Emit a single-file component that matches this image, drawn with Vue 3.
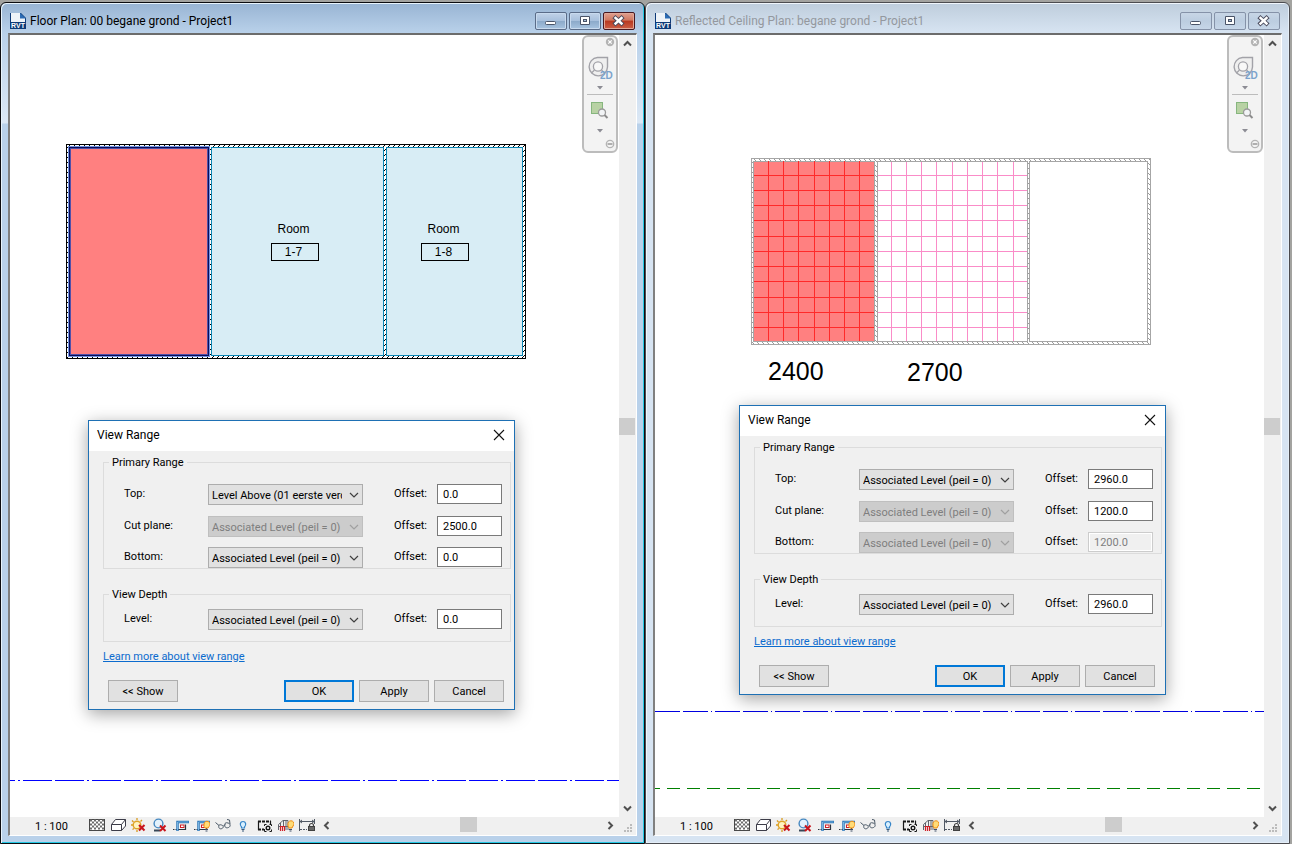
<script setup>
import { reactive } from 'vue'

const ASSOCIATED = 'Associated Level (peil = 0)'
const ABOVE = 'Level Above (01 eerste verdieping)'

const windows = reactive([
  {
    id: 'floor',
    title: 'Floor Plan: 00 begane grond - Project1',
    active: true,
    primary: [
      { name: 'Top:', level: ABOVE, offset: '0.0' },
      { name: 'Cut plane:', level: ASSOCIATED, offset: '2500.0', levelOff: true },
      { name: 'Bottom:', level: ASSOCIATED, offset: '0.0' },
    ],
    depth: [{ name: 'Level:', level: ASSOCIATED, offset: '0.0' }],
  },
  {
    id: 'ceiling',
    title: 'Reflected Ceiling Plan: begane grond - Project1',
    active: false,
    primary: [
      { name: 'Top:', level: ASSOCIATED, offset: '2960.0' },
      { name: 'Cut plane:', level: ASSOCIATED, offset: '1200.0', levelOff: true },
      { name: 'Bottom:', level: ASSOCIATED, offset: '1200.0', levelOff: true, offsetOff: true },
    ],
    depth: [{ name: 'Level:', level: ASSOCIATED, offset: '2960.0' }],
  },
])

const groups = (w) => [
  { key: 'primary', legend: 'Primary Range', rows: w.primary },
  { key: 'depth', legend: 'View Depth', rows: w.depth },
]

const rooms = [
  { x: 283.5, tag: '1-7' },
  { x: 433.5, tag: '1-8' },
]
const gridRows = [140, 155, 170, 185, 201, 216, 231, 246, 262, 277, 292]
const gridRed = [113, 128, 143, 159, 174, 189, 204]
const gridPink = [236, 251, 266, 281, 297, 312, 327, 342, 358]
const tools = [
  'Detail Level', 'Visual Style', 'Sun Path', 'Shadows', 'Crop View', 'Show Crop Region',
  'Temporary Hide/Isolate', 'Reveal Hidden Elements', 'Temporary View Properties',
  'Analytical Model', 'Reveal Constraints',
]
</script>

<template>
  <main class="desktop">
    <section v-for="w in windows" :key="w.id" class="window" :class="{ active: w.active }">
      <header class="titlebar">
        <svg class="app-icon" width="16" height="16" viewBox="0 0 16 16">
          <path d="M0 0H11L16 5V16H0Z" fill="#0d3a78" />
          <path d="M1 0H10V5H15V9H1Z" fill="#eef3f8" />
          <path d="M10 0L16 5.500H10Z" fill="#2c6cb4" />
          <text x="8" y="15" text-anchor="middle" class="rvt">RVT</text>
        </svg>
        <h1>{{ w.title }}</h1>
        <div class="caption">
          <button type="button" aria-label="Minimize">
            <svg width="30" height="16" viewBox="0 0 30 16"><rect x="9.500" y="8.500" width="10" height="3" rx="1" fill="#fff" stroke="#4a5468" /></svg>
          </button>
          <button type="button" aria-label="Maximize">
            <svg width="30" height="16" viewBox="0 0 30 16"><path d="M10.500 3.500h9v8h-9z" fill="#fff" stroke="#4a5468" /><rect x="13.500" y="6.500" width="3" height="2" fill="#a9bfd8" stroke="#4a5468" /></svg>
          </button>
          <button type="button" aria-label="Close" class="close">
            <svg width="30" height="16" viewBox="0 0 30 16"><path d="M11.500 5l6 5.500M17.500 5l-6 5.500" stroke="#4a4a5c" stroke-width="4.400" stroke-linecap="square" /><path d="M11.500 5l6 5.500M17.500 5l-6 5.500" stroke="#fff" stroke-width="2.400" stroke-linecap="square" /></svg>
          </button>
        </div>
      </header>

      <div class="client">
        <div class="view">
          <div class="canvas">
            <svg v-if="w.id === 'floor'" class="drawing" width="100%" height="100%">
              <defs>
                <pattern id="hatch-black" width="5" height="5" patternUnits="userSpaceOnUse">
                  <path d="M0 4h1v1h-1zM1 3h1v1h-1zM2 2h1v1h-1zM3 1h1v1h-1zM4 0h1v1h-1z" fill="#000" />
                </pattern>
              </defs>
              <g shape-rendering="crispEdges">
                <rect x="56.500" y="109.500" width="459" height="214" fill="#fff" />
                <rect x="56.500" y="109.500" width="459" height="214" fill="url(#hatch-black)" stroke="#000" />
                <rect x="201.500" y="112.500" width="172" height="208" fill="#d8edf5" stroke="#0a86b4" />
                <rect x="376.500" y="112.500" width="136" height="208" fill="#d8edf5" stroke="#0a86b4" />
                <rect x="58.500" y="111.500" width="141" height="210" fill="#ff8080" stroke="#6f90e0" />
                <rect x="59.500" y="112.500" width="139" height="208" fill="none" stroke="#080c58" />
                <rect x="60.500" y="113.500" width="137" height="206" fill="none" stroke="#5050a8" />
                <rect v-for="r in rooms" :key="r.tag" :x="r.x - 22" y="208.500" width="47" height="17" fill="none" stroke="#000" />
                <line x1="0" y1="745.500" x2="100%" y2="745.500" stroke="#0000ff" stroke-dasharray="29 3 2 3 29 3" stroke-dashoffset="24" />
              </g>
              <template v-for="r in rooms" :key="r.tag">
                <text :x="r.x" y="198" class="room">Room</text>
                <text :x="r.x" y="221" class="room">{{ r.tag }}</text>
              </template>
            </svg>
            <svg v-else class="drawing" width="100%" height="100%">
              <defs>
                <pattern id="hatch-gray" width="5" height="5" patternUnits="userSpaceOnUse">
                  <path d="M0 0h1v1h-1zM1 1h1v1h-1zM2 2h1v1h-1zM3 3h1v1h-1zM4 4h1v1h-1z" fill="#9a9a9a" />
                </pattern>
              </defs>
              <g shape-rendering="crispEdges" stroke="#a6a6a6">
                <rect x="96.500" y="123.500" width="399" height="186" fill="url(#hatch-gray)" />
                <rect x="98.500" y="126.500" width="121" height="180" fill="#ff8080" />
                <rect x="222.500" y="126.500" width="150" height="180" fill="#fff" />
                <rect x="374.500" y="126.500" width="118" height="180" fill="#fff" />
                <g stroke="#ff2a2a">
                  <path v-for="x in gridRed" :key="x" :d="`M${x + 0.5} 126V306`" />
                  <path v-for="y in gridRows" :key="y" :d="`M99 ${y + 0.5}H219`" />
                </g>
                <g stroke="#fa8cc8">
                  <path v-for="x in gridPink" :key="x" :d="`M${x + 0.5} 127V306`" />
                  <path v-for="y in gridRows" :key="y" :d="`M223 ${y + 0.5}H372`" />
                </g>
                <line x1="0" y1="676.500" x2="100%" y2="676.500" stroke="#0000e0" stroke-dasharray="25 3 1 3 25 3" stroke-dashoffset="32" />
                <line x1="0" y1="753.500" x2="100%" y2="753.500" stroke="#008000" stroke-dasharray="13 7" stroke-dashoffset="8" />
              </g>
              <text x="113" y="345" class="height-note">2400</text>
              <text x="252" y="346" class="height-note">2700</text>
            </svg>

            <nav class="navbar" aria-label="Navigation">
              <button type="button" class="end" aria-label="Close navigation bar">
                <svg width="10" height="10" viewBox="0 0 10 10"><circle cx="5" cy="5" r="4.200" fill="#b4b4b4" /><path d="M3.300 3.300l3.400 3.400M6.700 3.300l-3.400 3.400" stroke="#fff" stroke-width="1.200" /></svg>
              </button>
              <button type="button" class="wheel" aria-label="Steering wheel 2D">
                <svg width="30" height="35" viewBox="0 0 30 35">
                  <path d="M12.500 10.500H22.500V20A9.200 9.200 0 1 1 12.500 10.500Z" fill="#efefef" stroke="#a2a2a8" stroke-width="1.400" />
                  <circle cx="13" cy="19.500" r="4.600" fill="#f8f8f8" stroke="#a2a2a8" stroke-width="1.300" />
                  <path d="M9.500 23L6.500 26M16.500 23l2.500 2.500" stroke="#a2a2a8" stroke-width="1.200" />
                  <text x="15" y="32" class="two-d">2D</text>
                </svg>
              </button>
              <button type="button" class="drop" aria-label="Wheel options"><svg width="6" height="4" viewBox="0 0 6 4"><path d="M0 0H6L3 3.500Z" fill="#8c8c94" /></svg></button>
              <hr />
              <button type="button" class="region" aria-label="Zoom region">
                <svg width="20" height="20" viewBox="0 0 20 20">
                  <rect x="1.500" y="2.500" width="11" height="11" fill="#b8d2a4" stroke="#86b67e" />
                  <circle cx="12" cy="12.500" r="3.500" fill="#f2f4f6" stroke="#9a9a9a" stroke-width="1.300" />
                  <path d="M14.500 15l3 3" stroke="#8c8c8c" stroke-width="2" />
                </svg>
              </button>
              <button type="button" class="drop" aria-label="Zoom options"><svg width="6" height="4" viewBox="0 0 6 4"><path d="M0 0H6L3 3.500Z" fill="#8c8c94" /></svg></button>
              <button type="button" class="end last" aria-label="Navigation bar menu">
                <svg width="10" height="10" viewBox="0 0 10 10"><circle cx="5" cy="5" r="3.700" fill="#f4f4f4" stroke="#b4b4b4" stroke-width="1.300" /><path d="M2.500 5h5" stroke="#a8a8a8" stroke-width="1.800" /></svg>
              </button>
            </nav>

            <form class="dialog" :class="w.id" @submit.prevent>
              <div class="dialog-title">
                <h2>View Range</h2>
                <button type="button" aria-label="Close dialog">
                  <svg width="12" height="12" viewBox="0 0 12 12"><path d="M1 1l10 10M11 1L1 11" stroke="#111" stroke-width="1.100" /></svg>
                </button>
              </div>
              <div class="dialog-body">
                <fieldset v-for="g in groups(w)" :key="g.key" :class="g.key">
                  <legend>{{ g.legend }}</legend>
                  <div class="rows">
                    <template v-for="(r, i) in g.rows" :key="r.name">
                      <label :for="`${w.id}-${g.key}-level-${i}`">{{ r.name }}</label>
                      <span class="combo" :class="{ off: r.levelOff }">
                        <select :id="`${w.id}-${g.key}-level-${i}`" v-model="r.level" :disabled="r.levelOff">
                          <option>{{ ASSOCIATED }}</option>
                          <option>{{ ABOVE }}</option>
                        </select>
                        <svg width="10" height="6" viewBox="0 0 10 6"><path d="M1 1l4 4 4-4" fill="none" stroke="currentColor" stroke-width="1.200" /></svg>
                      </span>
                      <label class="offset" :for="`${w.id}-${g.key}-offset-${i}`">Offset:</label>
                      <input :id="`${w.id}-${g.key}-offset-${i}`" v-model="r.offset" type="text" :disabled="r.offsetOff" />
                    </template>
                  </div>
                </fieldset>
                <a href="#">Learn more about view range</a>
                <div class="actions">
                  <button type="button" class="show">&lt;&lt; Show</button>
                  <button type="submit" class="default">OK</button>
                  <button type="button">Apply</button>
                  <button type="button">Cancel</button>
                </div>
              </div>
            </form>
          </div>

          <div class="scroll vertical">
            <button type="button" aria-label="Scroll up"><svg width="9" height="7" viewBox="0 0 9 7"><path d="M1 5.500L4.500 2 8 5.500" fill="none" stroke="#505050" stroke-width="2" /></svg></button>
            <div class="track"><div class="thumb"></div></div>
            <button type="button" aria-label="Scroll down"><svg width="9" height="7" viewBox="0 0 9 7"><path d="M1 1.500L4.500 5 8 1.500" fill="none" stroke="#505050" stroke-width="2" /></svg></button>
          </div>
        </div>

        <footer class="status">
          <button type="button" class="scale">1 : 100</button>
          <div class="tools">
            <button v-for="(t, i) in tools" :key="t" type="button" :aria-label="t">
              <svg width="16" height="16" viewBox="0 0 16 16" fill="none">
                <template v-if="i === 0">
                  <rect x="0.500" y="1.500" width="15" height="11" fill="#fff" stroke="#484848" />
                  <path v-for="n in 5" :key="n" :d="`M${n % 2 ? 1 : 3} ${n * 2 + 0.5}H15`" stroke="#6c6c6c" stroke-width="2" stroke-dasharray="2 2" />
                </template>
                <template v-else-if="i === 1">
                  <path d="M1.500 6.500L5.500 1.500H15.500V8L11.500 12.500H1.500Z" fill="#fff" stroke="#3c3c48" />
                  <path d="M1.500 6.500H11.500V12.500M11.500 6.500L15.500 1.500" stroke="#3c3c48" />
                </template>
                <template v-else-if="i === 2">
                  <path d="M6 0V2M1 2.500L2.500 4M0 7H2M1.500 11.500L3 10.500M11 2L9.500 3.500M6 12V14" stroke="#d89a20" stroke-width="1.300" />
                  <circle cx="6" cy="7" r="3.800" fill="#fff4c0" stroke="#e0a428" stroke-width="1.400" />
                  <path d="M8 7l5.500 5.500M13.500 7l-5.500 5.500" stroke="#c8141c" stroke-width="2" />
                </template>
                <template v-else-if="i === 3">
                  <path d="M2 12.500H8" stroke="#384858" stroke-width="2" />
                  <circle cx="6.500" cy="5.500" r="4.400" fill="#e4f2fc" stroke="#4688c0" stroke-width="1.400" />
                  <path d="M8 7.500l5.500 5.500M13.500 7.500l-5.500 5.500" stroke="#c8141c" stroke-width="2" />
                </template>
                <template v-else-if="i === 4 || i === 5">
                  <path d="M0 11.500H1.500M2.500 11.500H12.500V6.500" stroke="#2c3440" stroke-width="1.200" />
                  <path d="M4.500 13V4H16" stroke="#2470b4" stroke-width="2.400" />
                  <path d="M4.500 12.500V4H15.500" stroke="#8cc4ec" stroke-width="0.800" />
                  <rect x="7.500" y="7" width="3.500" height="2.500" fill="#fff" stroke="#d02028" />
                  <g v-if="i === 5"><path d="M10 6a3 3 0 1 1 5 2.500L14 10H11L10 8.500Z" fill="#ffdc78" stroke="#f08c10" /><path d="M11 11.500H14M11.500 13H13.500" stroke="#405068" /></g>
                </template>
                <template v-else-if="i === 6">
                  <path d="M0.500 4.500L4 7.500M4 7.500C3 10 5 11.500 7 10.500S8.500 7.500 6.500 7 4.500 6.500 4 7.500ZM8.500 8L10 6.500M10 6C9 9 11 10.500 13.500 9.500S15.500 5.500 13 5 10.500 4.500 10 6ZM12 1.500L14.500 2 15 6" stroke="#4a5866" />
                </template>
                <template v-else-if="i === 7">
                  <path d="M5.500 9C3.500 7 4 3.500 7 3.500S10.500 7 8.500 9V10H5.500Z" fill="#d8f0ff" stroke="#3484c8" stroke-width="1.200" />
                  <path d="M5.500 11.500H8.500M6 13H8" stroke="#385878" />
                </template>
                <template v-else-if="i === 8">
                  <path d="M1 3.500H14M1 11.500H7" stroke="#181818" stroke-width="1.800" stroke-dasharray="3 1" />
                  <path d="M1.500 3V12M13.500 3V6" stroke="#181818" stroke-width="1.200" />
                  <path d="M7.500 8V6.500H9.500M12.500 6.500H14.500V8M7.500 11V13.500H9.500M12.500 13.500H14.500V11.500" stroke="#181818" />
                  <circle cx="11" cy="10" r="1.800" fill="#fff" stroke="#181818" stroke-width="1.400" />
                </template>
                <template v-else-if="i === 9">
                  <path d="M0.500 12V6.500L5 2.500H10V12M0 8.500H10M2.500 5V8M5.500 2.500V8M8 3V12" stroke="#60646c" />
                  <path d="M2.500 13V8.500H6.500V13M4.500 8.500V13" stroke="#d02028" stroke-width="1.200" />
                  <path d="M10 5.500a3 3 0 1 1 5 2.500L14 10H11L10 8Z" fill="#ffdc78" stroke="#f08c10" />
                  <path d="M11 11.500H14M11.500 13H13.500" stroke="#405068" />
                </template>
                <template v-else>
                  <path d="M0.500 1V13M15.500 1V6M1 3.500H15M3 2L1 3.500 3 5M13 2L15 3.500 13 5" stroke="#505864" />
                  <path d="M1 11.500H8" stroke="#505864" stroke-dasharray="2 1" />
                  <path d="M10.500 9V7.500a2 2 0 0 1 4 0V9" stroke="#404040" stroke-width="1.200" />
                  <rect x="9.500" y="8.500" width="6" height="4" fill="#686868" stroke="#404040" />
                </template>
              </svg>
            </button>
          </div>
          <div class="scroll horizontal">
            <button type="button" aria-label="Scroll left"><svg width="7" height="9" viewBox="0 0 7 9"><path d="M5.500 1L2 4.500 5.500 8" fill="none" stroke="#505050" stroke-width="2" /></svg></button>
            <div class="track"><div class="thumb"></div></div>
            <button type="button" aria-label="Scroll right"><svg width="7" height="9" viewBox="0 0 7 9"><path d="M1.500 1L5 4.500 1.500 8" fill="none" stroke="#505050" stroke-width="2" /></svg></button>
          </div>
          <svg class="grip" width="17" height="18" viewBox="0 0 17 18"><path d="M11 7h2v2h-2zM11 10h2v2h-2zM8 10h2v2h-2zM11 13h2v2h-2zM8 13h2v2h-2zM5 13h2v2h-2z" fill="#bcbcbc" /></svg>
        </footer>
      </div>
    </section>
  </main>
</template>

<style>
html,
body {
  margin: 0;
  background: #a3a3a0;
}
</style>

<style scoped>
* {
  box-sizing: border-box;
}
button,
input,
select {
  font: inherit;
  color: inherit;
  margin: 0;
}
button {
  padding: 0;
  border: 0;
  background: none;
}
svg {
  display: block;
}
.desktop {
  display: flex;
  min-height: 100vh;
  padding: 2px 2px 0 0;
  font: 11px/15px Roboto, 'Noto Sans', sans-serif;
  color: #000;
}
.window {
  flex: 1;
  min-width: 0;
  display: flex;
  flex-direction: column;
  padding: 0 7px 7px;
  border: 1px solid #4c4c50;
  border-radius: 6px 6px 0 0;
  background: linear-gradient(#becddc, #d7e4f2 30px);
  box-shadow: inset 1px 1px 0 #f0f6fc, inset -1px -1px 0 #e4eef8;
}
.window.active {
  border-color: #0c0c10;
  background: linear-gradient(#98b4d3, #b9d1ea 30px, #dce8f5 120px, #b9d1ea 121px);
  box-shadow: inset 1px 1px 0 #e8f4fc, inset -1px -1px 0 #24c8e4;
}
.titlebar {
  display: flex;
  align-items: center;
  height: 30px;
  padding: 6px 2px 0;
}
.rvt {
  font: bold 7px 'Liberation Sans', sans-serif;
  fill: #fff;
}
.titlebar h1 {
  flex: 1;
  margin: 0 0 0 4px;
  font-size: 12px;
  font-weight: 400;
  line-height: 18px;
  white-space: nowrap;
  color: #94989e;
}
.active .titlebar h1 {
  color: #000;
}
.caption {
  display: flex;
  gap: 2px;
}
.caption button {
  width: 32px;
  height: 18px;
  border: 1px solid #8592a8;
  border-radius: 2px;
  background: linear-gradient(#c8d6e6, #bccde0 50%, #c6d6e8);
}
.active .caption button {
  border-color: #5a6c88;
  background: linear-gradient(#c0d2e8, #a8c0dc 48%, #8caaca 52%, #a8c4e0);
  box-shadow: inset 0 0 0 1px #c8daee;
}
.active .caption .close {
  border-color: #481820;
  background: linear-gradient(#e0a090, #d07860 45%, #b83820 50%, #cc6048);
  box-shadow: inset 0 0 0 1px #e0a898;
}
.client {
  flex: 1;
  display: flex;
  flex-direction: column;
  border: solid #fff;
  border-width: 2px 1px 1px 2px;
  border-top-color: #6c6c6c;
  border-left-color: #808080;
}
.view {
  flex: 1;
  display: flex;
}
.canvas {
  flex: 1;
  position: relative;
  overflow: hidden;
  background: #fff;
}
.drawing {
  position: absolute;
  inset: 0;
}
.room {
  font: 12px 'Liberation Sans', sans-serif;
  text-anchor: middle;
}
.height-note {
  font: 25px 'Liberation Sans', sans-serif;
}

.navbar {
  position: absolute;
  top: 0;
  right: 1px;
  width: 36px;
  border: 2px solid #bcbcbc;
  border-radius: 6px;
  background: #f3f3f3;
  display: flex;
  flex-direction: column;
}
.navbar button {
  display: flex;
  justify-content: center;
  align-items: center;
}
.navbar .end {
  justify-content: flex-end;
  padding-right: 1px;
}
.navbar .end.last {
  height: 14px;
}
.navbar .drop {
  height: 12px;
}
.navbar .region {
  height: 30px;
}
.navbar hr {
  width: 26px;
  margin: 0 auto;
  border: 0;
  border-top: 1px solid #bcbcbc;
}
.two-d {
  font: bold 10px 'Liberation Sans', sans-serif;
  fill: #7ba3cc;
}

.scroll {
  display: flex;
  background: #f0f0f0;
}
.scroll button {
  width: 16px;
  height: 17px;
  display: grid;
  place-items: center;
}
.vertical {
  flex-direction: column;
  width: 17px;
}
.horizontal {
  flex: 1;
  padding-right: 1px;
}
.track {
  flex: 1;
  display: flex;
  flex-direction: inherit;
  justify-content: center;
}
.thumb {
  background: #cdcdcd;
}
.vertical .thumb {
  width: 16px;
  height: 17px;
}
.horizontal .thumb {
  width: 17px;
  height: 15px;
}
.status {
  display: flex;
  height: 18px;
  background: #f0f0f0;
}
.scale {
  width: 79px;
  padding-left: 25px;
  text-align: left;
}
.tools {
  display: flex;
  gap: 5px;
  margin-right: 3px;
}

.dialog {
  position: absolute;
  width: 427px;
  border: 1px solid #1e70b4;
  background: #f0f0f0;
  box-shadow: 0 4px 16px rgba(0, 0, 0, 0.36);
}
.dialog.floor {
  left: 78px;
  top: 385px;
}
.dialog.ceiling {
  left: 84px;
  top: 370px;
}
.dialog-title {
  display: flex;
  align-items: center;
  justify-content: space-between;
  height: 30px;
  padding: 0 9px 2px 8px;
  background: #fff;
}
.dialog-title h2 {
  margin: 0;
  font-size: 12px;
  font-weight: 400;
}
.dialog-body {
  padding: 5px 3px 7px 14px;
}
fieldset {
  min-width: 0;
  margin: 0;
  padding: 15px 9px 0 20px;
  border: 1px solid #dcdcdc;
}
fieldset.depth {
  margin-top: 19px;
  padding: 8px 9px 11px 20px;
}
legend {
  margin-left: -15px;
  padding: 0 3px;
  line-height: 13px;
}
.rows {
  display: grid;
  grid-template-columns: 84px 155px 74px 65px;
}
.primary .rows {
  grid-template-rows: 32px 31px 21px;
}
.rows label {
  line-height: 20px;
}
.rows .offset {
  padding-left: 31px;
}
.combo {
  position: relative;
  height: 21px;
  color: #404040;
}
.combo.off {
  color: #a0a0a0;
}
.combo svg {
  position: absolute;
  right: 4px;
  top: 8px;
  pointer-events: none;
}
select {
  appearance: none;
  width: 100%;
  height: 21px;
  padding: 1px 20px 0 3px;
  border: 1px solid #adadad;
  border-radius: 0;
  background: #e1e1e1;
  color: #000;
}
select:disabled {
  border-color: #bfbfbf;
  background: #cccccc;
  color: #7e7e7e;
  opacity: 1;
}
input {
  width: 100%;
  height: 20px;
  padding: 0 5px;
  border: 1px solid #7a7a7a;
  background: #fff;
}
input:disabled {
  border-color: #cccccc;
  background: #f0f0f0;
  color: #7e7e7e;
  box-shadow: inset 0 0 0 1px #fff;
}
a {
  display: block;
  width: max-content;
  margin-top: 7px;
  color: #0b6bce;
}
.actions {
  display: flex;
  gap: 5px;
  margin: 16px 7px 0 5px;
}
.actions button {
  width: 70px;
  height: 22px;
  border: 1px solid #adadad;
  background: #e1e1e1;
}
.actions .show {
  margin-right: auto;
}
.actions .default {
  border: 2px solid #0078d7;
}
</style>
